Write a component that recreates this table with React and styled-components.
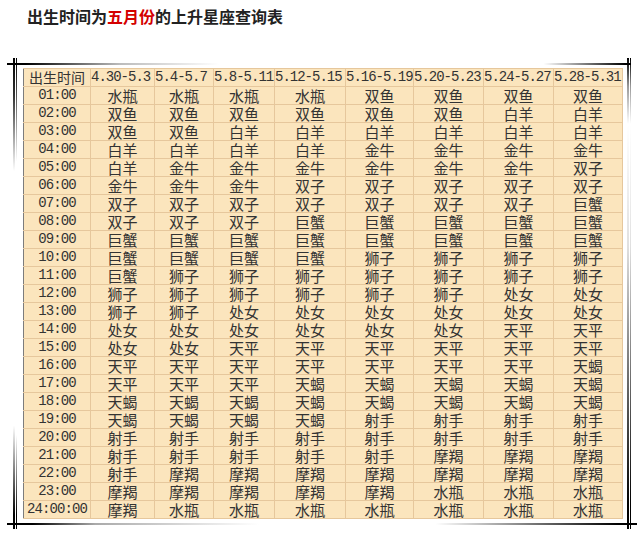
import React from "react"
import styled, { createGlobalStyle } from "styled-components"

const GlobalStyle = createGlobalStyle`
  body {
    margin: 0;
    background: #ffffff;
    font-family: "Noto Sans CJK SC", "Noto Sans", sans-serif;
    -webkit-font-smoothing: antialiased;
  }
`

const widths = [67, 64, 59, 61, 71, 68, 70, 70, 69]

const dates = [
  "4.30-5.3",
  "5.4-5.7",
  "5.8-5.11",
  "5.12-5.15",
  "5.16-5.19",
  "5.20-5.23",
  "5.24-5.27",
  "5.28-5.31",
]

const rows = [
  ["01:00", "水瓶 水瓶 水瓶 水瓶 双鱼 双鱼 双鱼 双鱼"],
  ["02:00", "双鱼 双鱼 双鱼 双鱼 双鱼 双鱼 白羊 白羊"],
  ["03:00", "双鱼 双鱼 白羊 白羊 白羊 白羊 白羊 白羊"],
  ["04:00", "白羊 白羊 白羊 白羊 金牛 金牛 金牛 金牛"],
  ["05:00", "白羊 金牛 金牛 金牛 金牛 金牛 金牛 双子"],
  ["06:00", "金牛 金牛 金牛 双子 双子 双子 双子 双子"],
  ["07:00", "双子 双子 双子 双子 双子 双子 双子 巨蟹"],
  ["08:00", "双子 双子 双子 巨蟹 巨蟹 巨蟹 巨蟹 巨蟹"],
  ["09:00", "巨蟹 巨蟹 巨蟹 巨蟹 巨蟹 巨蟹 巨蟹 巨蟹"],
  ["10:00", "巨蟹 巨蟹 巨蟹 巨蟹 狮子 狮子 狮子 狮子"],
  ["11:00", "巨蟹 狮子 狮子 狮子 狮子 狮子 狮子 狮子"],
  ["12:00", "狮子 狮子 狮子 狮子 狮子 狮子 处女 处女"],
  ["13:00", "狮子 狮子 处女 处女 处女 处女 处女 处女"],
  ["14:00", "处女 处女 处女 处女 处女 处女 天平 天平"],
  ["15:00", "处女 处女 天平 天平 天平 天平 天平 天平"],
  ["16:00", "天平 天平 天平 天平 天平 天平 天平 天蝎"],
  ["17:00", "天平 天平 天平 天蝎 天蝎 天蝎 天蝎 天蝎"],
  ["18:00", "天蝎 天蝎 天蝎 天蝎 天蝎 天蝎 天蝎 天蝎"],
  ["19:00", "天蝎 天蝎 天蝎 天蝎 射手 射手 射手 射手"],
  ["20:00", "射手 射手 射手 射手 射手 射手 射手 射手"],
  ["21:00", "射手 射手 射手 射手 射手 摩羯 摩羯 摩羯"],
  ["22:00", "射手 摩羯 摩羯 摩羯 摩羯 摩羯 摩羯 摩羯"],
  ["23:00", "摩羯 摩羯 摩羯 摩羯 摩羯 水瓶 水瓶 水瓶"],
  ["24:00:00", "摩羯 水瓶 水瓶 水瓶 水瓶 水瓶 水瓶 水瓶"],
]

const App = () => {
  return (
    <Page>
      <GlobalStyle />
      <Title>
        出生时间为<Red>五月份</Red>的上升星座查询表
      </Title>
      <Frame>
        <Table>
          <colgroup>
            {widths.map((w, index) => (
              <Col key={index.toString()} $w={w} />
            ))}
          </colgroup>
          <thead>
            <tr>
              <CornerCell>出生时间</CornerCell>
              {dates.map((d, index) => (
                <DateCell key={index.toString()}>{d}</DateCell>
              ))}
            </tr>
          </thead>
          <tbody>
            {rows.map(([time, signs]) => (
              <tr key={time}>
                <TimeCell>{time}</TimeCell>
                {signs.split(" ").map((s, index) => (
                  <SignCell key={index.toString()}>{s}</SignCell>
                ))}
              </tr>
            ))}
          </tbody>
        </Table>
      </Frame>
    </Page>
  )
}

const Page = styled.div`
  width: 644px;
  height: 541px;
  padding: 0 7px;
  box-sizing: border-box;
  overflow: hidden;
`

const Title = styled.h1`
  margin: 0;
  padding: 8px 0 0 20px;
  height: 16px;
  font-size: 16px;
  line-height: 16px;
  font-weight: bold;
  color: #222222;
  font-family: "Noto Sans CJK SC", sans-serif;
`

const Red = styled.span`
  color: #d40000;
`

const Frame = styled.div`
  margin-top: 34px;
  width: 630px;
  height: 471px;
  box-sizing: border-box;
  padding: 10px 0 0 16px;
  background:
    linear-gradient(to right, #000 0%, #000 3%, #bbb 18%, rgba(0, 0, 0, 0) 34%, rgba(0, 0, 0, 0) 86%, #000 99%) 0 5px / 624px 2px no-repeat,
    linear-gradient(to right, #000 0%, #000 4%, #aaa 14%, rgba(0, 0, 0, 0) 40%, rgba(0, 0, 0, 0) 68%, #000 97%) 0 465px / 630px 2px no-repeat,
    linear-gradient(to bottom, #000 0%, #333 8%, rgba(0, 0, 0, 0) 24%, rgba(0, 0, 0, 0) 78%, #000 97%) 6px 0 / 2px 471px no-repeat,
    linear-gradient(to bottom, #000 0%, #555 8%, rgba(0, 0, 0, 0) 22%, rgba(0, 0, 0, 0) 80%, #000 97%) 9px 0 / 1px 471px no-repeat,
    linear-gradient(to bottom, #000 0%, #999 6%, rgba(0, 0, 0, 0) 14%, rgba(0, 0, 0, 0.12) 40%, #000 95%) 620px 0 / 2px 471px no-repeat,
    linear-gradient(to bottom, #000 0%, #999 6%, rgba(0, 0, 0, 0) 14%, rgba(0, 0, 0, 0.12) 40%, #000 95%) 623px 0 / 1px 471px no-repeat;
`

const Table = styled.table`
  width: 599px;
  table-layout: fixed;
  border-collapse: collapse;
  background: #fbe5bd;
  border-left: 1px solid #7c7c7c;
  color: #333333;
`

const Col = styled.col`
  width: ${p => p.$w}px;
`

const Cell = styled.td`
  height: 17px;
  padding: 0;
  border: 1px solid #e6c79c;
  line-height: 17px;
  white-space: nowrap;
`

const CornerCell = styled(Cell).attrs({ as: "th" })`
  font-weight: normal;
  text-align: center;
  font-size: 14px;
  font-family: "Noto Sans CJK SC", sans-serif;
  border-left: 1px solid #7c7c7c;
`

const DateCell = styled(Cell).attrs({ as: "th" })`
  font-weight: normal;
  text-align: left;
  padding-left: 0;
  overflow: hidden;
  font-size: 14px;
  letter-spacing: -1px;
  font-family: "Liberation Mono", monospace;
`

const TimeCell = styled(Cell)`
  text-align: center;
  font-size: 14px;
  letter-spacing: -0.9px;
  font-family: "Liberation Mono", monospace;
  border-left: 1px solid #7c7c7c;
`

const SignCell = styled(Cell)`
  text-align: center;
  font-size: 15px;
  font-family: "Noto Sans CJK JP", "Noto Sans CJK SC", sans-serif;
  color: #333333;
`

export default App
